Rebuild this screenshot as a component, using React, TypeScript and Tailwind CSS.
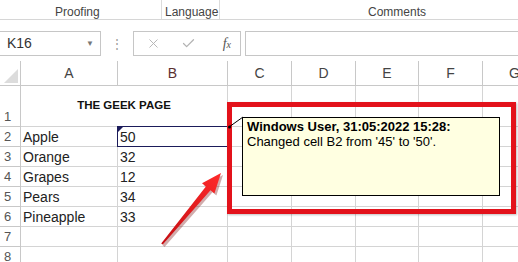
import { X, Check } from 'lucide-react';

const cols = ['A', 'B', 'C', 'D', 'E', 'F', 'G'];

const data: Record<number, [string, string]> = {
  2: ['Apple', '50'],
  3: ['Orange', '32'],
  4: ['Grapes', '12'],
  5: ['Pears', '34'],
  6: ['Pineapple', '33'],
};

const rows = [1, 2, 3, 4, 5, 6, 7, 8];

export default function App() {
  return (
    <div className="relative w-[518px] h-[262px] overflow-hidden bg-white font-['Liberation_Sans',Arial,sans-serif]">
      {/* ribbon group labels */}
      <div className="flex h-[20px] border-b border-[#d6d6d6] text-[12px] text-[#444]">
        <div className="w-[162px] border-r border-[#dcdcdc] pl-[55px] pt-[3px]">Proofing</div>
        <div className="w-[58px] border-r border-[#dcdcdc] pl-[3px] pt-[3px]">Language</div>
        <div className="flex-1 pl-[148px] pt-[3px]">Comments</div>
      </div>

      {/* formula bar */}
      <div className="flex h-[25px] mt-[11px] items-stretch text-[#333]">
        <div className="flex w-[101px] items-center justify-between border border-l-0 border-[#c6c6c6] pl-[7px] pr-[6px] text-[14px]">
          <span>K16</span>
          <span className="text-[8px] text-[#777]">▼</span>
        </div>
        <div className="flex w-[32px] items-center justify-center text-[12px] text-[#999]">⋮</div>
        <div className="flex w-[108px] items-center border border-[#c6c6c6] text-[#b3b3b3]">
          <X size={15} strokeWidth={1.5} className="ml-[12px]" />
          <Check size={15} strokeWidth={2} className="ml-[20px]" />
          <span className="ml-auto mr-[9px] font-['Liberation_Serif',serif] italic text-[14px] text-[#555]">
            f<span className="text-[10px]">x</span>
          </span>
        </div>
        <div className="ml-[4px] flex-1 border border-r-0 border-[#c6c6c6]" />
      </div>

      {/* sheet */}
      <div className="mt-[5px] grid grid-cols-[21px_97px_110px_64px_64px_63px_64px_64px] grid-rows-[25px_41px_repeat(7,20px)] text-[#222]">
        <div className="relative border-r border-b border-[#c8c8c8]">
          <svg className="absolute left-[4px] top-[8px]" width="14" height="14" viewBox="0 0 14 14">
            <polygon points="14,0 14,14 0,14" fill="#dcdcdc" />
          </svg>
        </div>
        {cols.map((c) => (
          <div
            key={c}
            className={`flex items-center justify-center border-r border-b border-[#c8c8c8] text-[14px] ${c === 'B' ? 'text-[#5b3030]' : 'text-[#444]'}`}
          >
            {c}
          </div>
        ))}

        {rows.map((r) => (
          <Row key={r} r={r} />
        ))}
      </div>

      {/* red highlight around the comment */}
      <div className="absolute left-[227px] top-[102px] w-[289px] h-[112px] border-[5px] border-[#e3121b] shadow-[1px_1px_2px_rgba(0,0,0,0.25)]" />

      {/* comment connector */}
      <svg className="absolute left-0 top-0" width="518" height="262">
        <line x1="229" y1="127" x2="243" y2="117" stroke="#000" strokeWidth="1" />
        <circle cx="229.5" cy="127" r="1.5" fill="#000" />
      </svg>

      {/* comment box */}
      <div className="absolute left-[242px] top-[117px] w-[258px] h-[79px] border border-black bg-[#ffffe1] px-[4px] pt-[1px] text-[13px] leading-[15px] text-black">
        <div className="font-bold">Windows User, 31:05:2022 15:28:</div>
        <div>Changed cell B2 from '45' to '50'.</div>
      </div>

      {/* arrow */}
      <svg className="absolute left-0 top-0" width="518" height="262">
        <defs>
          <linearGradient id="arr" x1="0" y1="1" x2="1" y2="0">
            <stop offset="0" stopColor="#c40d12" />
            <stop offset="1" stopColor="#ff2a2a" />
          </linearGradient>
        </defs>
        <polygon
          points="163.5,246 164.5,247 212.5,192.3 216.4,195.5 223,175 204,185.3 208,188.5 162.5,245"
          fill="#7a1010"
          opacity="0.35"
        />
        <polygon
          points="161.2,243.6 162.8,244.6 210.5,190.3 214.4,193.5 221,173 202,183.3 205.9,186.5"
          fill="url(#arr)"
        />
      </svg>
    </div>
  );
}

function Row({ r }: { r: number }) {
  const cell = 'border-r border-b border-[#d4d4d4]';
  const rowHead = (
    <div className="flex items-end border-r border-b border-[#c8c8c8] pl-[4px] pb-[1px] text-[13px] leading-[16px] text-[#555]">
      {r}
    </div>
  );

  if (r === 1) {
    return (
      <>
        {rowHead}
        <div className={`col-span-2 flex items-center justify-center font-bold text-[11.5px] text-[#111] ${cell}`}>
          THE GEEK PAGE
        </div>
        {[3, 4, 5, 6, 7].map((i) => (
          <div key={i} className={cell} />
        ))}
      </>
    );
  }

  const d = data[r];
  return (
    <>
      {rowHead}
      <div className={`flex items-end pl-[2px] text-[14px] leading-[17px] ${cell}`}>{d?.[0]}</div>
      <div className={`relative flex items-end pl-[2px] text-[14px] leading-[17px] ${cell}`}>
        {d?.[1]}
        {r === 2 && (
          <>
            <div className="absolute -left-px -top-px -right-px -bottom-px border border-[#1b1b5a]" />
            <svg className="absolute -left-px -top-px" width="7" height="7" viewBox="0 0 7 7">
              <polygon points="0,0 7,0 0,7" fill="#1b1b5a" />
            </svg>
          </>
        )}
      </div>
      {[3, 4, 5, 6, 7].map((i) => (
        <div key={i} className={cell} />
      ))}
    </>
  );
}
